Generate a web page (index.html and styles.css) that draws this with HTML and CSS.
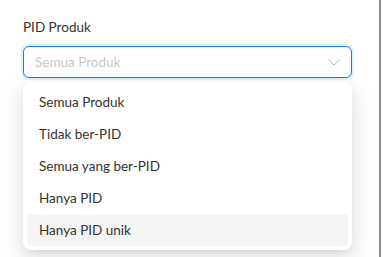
FILE: index.html
```html
<!DOCTYPE html>
<html lang="id">
<head>
<meta charset="utf-8">
<link rel="stylesheet" href="styles.css">
</head>
<body>
<div class="panel">
  <div class="field">
    <div class="label">PID Produk</div>
    <div class="select">
      <span class="placeholder">Semua Produk</span>
      <svg class="chevron" width="12" height="12" viewBox="0 0 12 12"><path d="M0.5 3.5 L6 9 L11.5 3.5" fill="none" stroke="#b5b5b5" stroke-width="1"/></svg>
    </div>
    <ul class="dropdown">
      <li class="option">Semua Produk</li>
      <li class="option">Tidak ber-PID</li>
      <li class="option">Semua yang ber-PID</li>
      <li class="option">Hanya PID</li>
      <li class="option active">Hanya PID unik</li>
    </ul>
  </div>
</div>
</body>
</html>
```
FILE: styles.css
```css
html, body {
  margin: 0;
  padding: 0;
  background: #fff;
}
body {
  width: 383px;
  height: 257px;
  overflow: hidden;
  font-family: "Lato", "Noto Sans", sans-serif;
  font-size: 13.5px;
  color: rgba(0, 0, 0, 0.88);
}
.panel {
  width: 381px;
  height: 257px;
  box-sizing: border-box;
  border-right: 2px solid #8c8c8c;
  padding: 16px 0 0 23px;
}
.field {
  width: 329px;
  display: flex;
  flex-direction: column;
}
.label {
  line-height: 22px;
  padding-bottom: 8px;
  color: #333;
}
.select {
  height: 32px;
  box-sizing: border-box;
  border: 1px solid #1677ff;
  border-radius: 6px;
  box-shadow: 0 0 0 2px rgba(5, 145, 255, 0.12);
  display: flex;
  align-items: center;
  justify-content: space-between;
  padding: 0 11px;
}
.placeholder {
  color: rgba(0, 0, 0, 0.25);
  line-height: 22px;
}
.chevron {
  display: block;
}
.dropdown {
  list-style: none;
  margin: 4px 0 0;
  padding: 4px;
  border-radius: 8px;
  background: #fff;
  box-shadow: 0 6px 16px 0 rgba(0, 0, 0, 0.08), 0 3px 6px -4px rgba(0, 0, 0, 0.12), 0 9px 28px 8px rgba(0, 0, 0, 0.05);
}
.option {
  height: 32px;
  box-sizing: border-box;
  padding: 5px 12px;
  line-height: 22px;
  border-radius: 4px;
  color: #333;
}
.option.active {
  background: rgba(0, 0, 0, 0.04);
}
```
